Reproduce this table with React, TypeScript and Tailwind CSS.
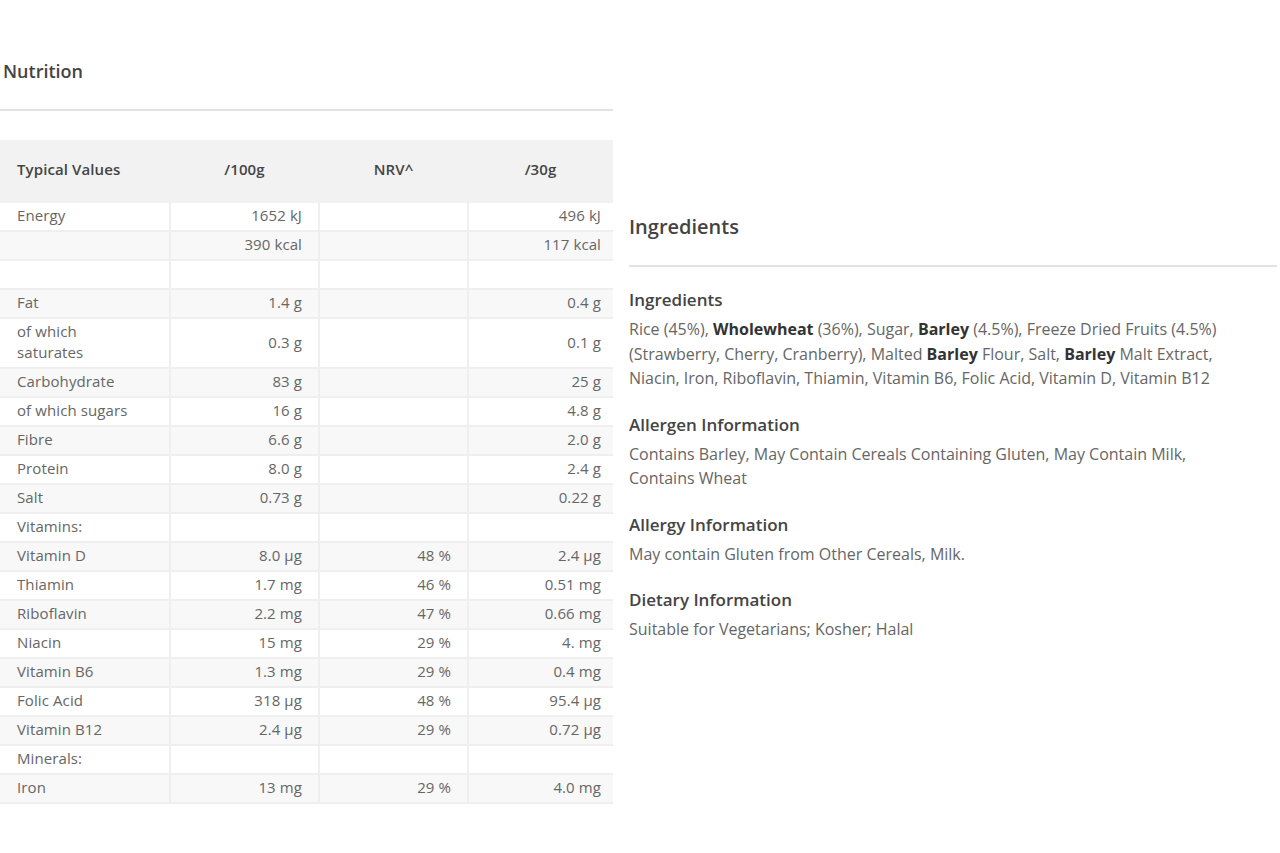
import React from 'react'

type Row = { label: string; per100?: string; nrv?: string; per30?: string }

const rows: Row[] = [
  { label: 'Energy', per100: '1652 kJ', per30: '496 kJ' },
  { label: '', per100: '390 kcal', per30: '117 kcal' },
  { label: '' },
  { label: 'Fat', per100: '1.4 g', per30: '0.4 g' },
  { label: 'of which saturates', per100: '0.3 g', per30: '0.1 g' },
  { label: 'Carbohydrate', per100: '83 g', per30: '25 g' },
  { label: 'of which sugars', per100: '16 g', per30: '4.8 g' },
  { label: 'Fibre', per100: '6.6 g', per30: '2.0 g' },
  { label: 'Protein', per100: '8.0 g', per30: '2.4 g' },
  { label: 'Salt', per100: '0.73 g', per30: '0.22 g' },
  { label: 'Vitamins:' },
  { label: 'Vitamin D', per100: '8.0 µg', nrv: '48 %', per30: '2.4 µg' },
  { label: 'Thiamin', per100: '1.7 mg', nrv: '46 %', per30: '0.51 mg' },
  { label: 'Riboflavin', per100: '2.2 mg', nrv: '47 %', per30: '0.66 mg' },
  { label: 'Niacin', per100: '15 mg', nrv: '29 %', per30: '4. mg' },
  { label: 'Vitamin B6', per100: '1.3 mg', nrv: '29 %', per30: '0.4 mg' },
  { label: 'Folic Acid', per100: '318 µg', nrv: '48 %', per30: '95.4 µg' },
  { label: 'Vitamin B12', per100: '2.4 µg', nrv: '29 %', per30: '0.72 µg' },
  { label: 'Minerals:' },
  { label: 'Iron', per100: '13 mg', nrv: '29 %', per30: '4.0 mg' },
]

function NutritionTable() {
  return (
    <table className="w-[613px] table-fixed border-collapse text-[15px] leading-[21px] tracking-[0.1px] text-[#666]">
      <colgroup>
        <col className="w-[170px]" />
        <col className="w-[149px]" />
        <col className="w-[149px]" />
        <col className="w-[145px]" />
      </colgroup>
      <thead>
        <tr className="h-[63px] bg-[#f2f2f2] text-[#444]">
          <th className="pb-[5px] pl-[17px] text-left font-semibold">Typical Values</th>
          <th className="pb-[5px] text-center font-semibold">/100g</th>
          <th className="pb-[5px] text-center font-semibold">NRV^</th>
          <th className="pb-[5px] text-center font-semibold">/30g</th>
        </tr>
      </thead>
      <tbody>
        {rows.map((r, i) => (
          <tr key={i} className={i % 2 === 1 ? 'bg-[#f8f8f8]' : 'bg-white'}>
            <td className="border-b-2 border-[#efefef] pt-[2px] pb-[4px] pl-[17px] pr-10 align-top">
              {r.label || '\u00a0'}
            </td>
            <td className="border-b-2 border-l-2 border-[#efefef] pt-[2px] pb-[4px] pr-4 text-right">
              {r.per100}
            </td>
            <td className="border-b-2 border-l-2 border-[#efefef] pt-[2px] pb-[4px] pr-4 text-right">
              {r.nrv}
            </td>
            <td className="border-b-2 border-l-2 border-[#efefef] pt-[2px] pb-[4px] pr-[12px] text-right">
              {r.per30}
            </td>
          </tr>
        ))}
      </tbody>
    </table>
  )
}

function InfoBlock({ title, children }: { title: string; children: React.ReactNode }) {
  return (
    <div className="flex flex-col gap-[5px]">
      <h4 className="text-[17px] font-semibold leading-[24px] text-[#444]">{title}</h4>
      <p className="text-[16px] leading-[24.5px] text-[#666]">{children}</p>
    </div>
  )
}

export default function App() {
  return (
    <div
      className="flex w-[1280px] items-center gap-4 bg-white pt-[55px] pb-[50px]"
      style={{ fontFamily: '"Open Sans", "Noto Sans", sans-serif' }}
    >
      <div className="flex w-[613px] shrink-0 flex-col">
        <h3 className="pl-[3px] text-[18px] font-semibold leading-[32px] text-[#444]">Nutrition</h3>
        <div className="mt-[22px] h-[2px] bg-[#e2e2e2]" />
        <div className="mt-[29px]">
          <NutritionTable />
        </div>
      </div>

      <div className="flex w-[648px] flex-col pb-[6px]">
        <h3 className="text-[20px] font-semibold leading-[32px] text-[#444]">Ingredients</h3>
        <div className="mt-[22px] h-[2px] bg-[#e2e2e2]" />
        <div className="mt-[21px] flex flex-col gap-[22px]">
          <InfoBlock title="Ingredients">
            Rice (45%), <b className="font-bold text-[#333]">Wholewheat</b> (36%), Sugar,{' '}
            <b className="font-bold text-[#333]">Barley</b> (4.5%), Freeze Dried Fruits (4.5%)
            <br />
            (Strawberry, Cherry, Cranberry), Malted <b className="font-bold text-[#333]">Barley</b>{' '}
            Flour, Salt, <b className="font-bold text-[#333]">Barley</b> Malt Extract,
            <br />
            Niacin, Iron, Riboflavin, Thiamin, Vitamin B6, Folic Acid, Vitamin D, Vitamin B12
          </InfoBlock>
          <InfoBlock title="Allergen Information">
            Contains Barley, May Contain Cereals Containing Gluten, May Contain Milk,
            <br />
            Contains Wheat
          </InfoBlock>
          <InfoBlock title="Allergy Information">
            May contain Gluten from Other Cereals, Milk.
          </InfoBlock>
          <InfoBlock title="Dietary Information">Suitable for Vegetarians; Kosher; Halal</InfoBlock>
        </div>
      </div>
    </div>
  )
}
